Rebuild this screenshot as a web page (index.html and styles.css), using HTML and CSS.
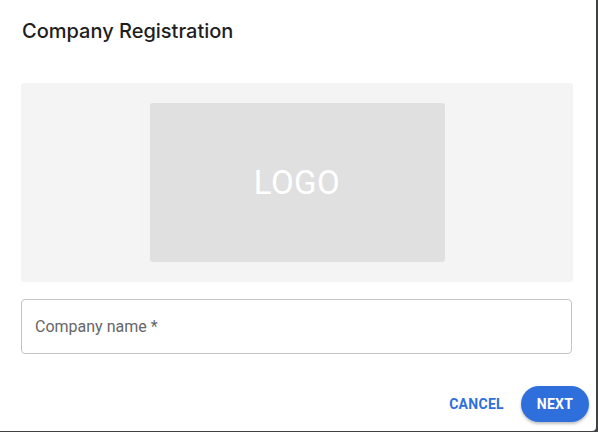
FILE: index.html
```html
<!DOCTYPE html>
<html lang="en">
<head>
    <meta charset="UTF-8">
    <meta name="viewport" content="width=device-width, initial-scale=1.0">
    <link rel="stylesheet" href="styles.css">
</head>
<body>
    <div class="dialog">
        <h2 class="dialog-title">Company Registration</h2>
        <div class="logo-area">
            <div class="logo-box">LOGO</div>
        </div>
        <div class="field">
            <span class="field-label">Company name *</span>
        </div>
        <div class="actions">
            <button class="btn btn-text" type="button">CANCEL</button>
            <button class="btn btn-primary" type="button">NEXT</button>
        </div>
    </div>
</body>
</html>
```

FILE: styles.css
```css
html, body {
    margin: 0;
    padding: 0;
}
body {
    background-color: #3f4144;
    font-family: Roboto, "Liberation Sans", Arial, sans-serif;
    width: 598px;
    height: 432px;
    overflow: hidden;
}
.dialog {
    background-color: #ffffff;
    width: 596px;
    height: 431px;
    box-sizing: border-box;
    border-radius: 0 0 4px 0;
    padding: 0 23px 0 21px;
    display: flex;
    flex-direction: column;
}
.dialog-title {
    margin: 0;
    padding-top: 19px;
    padding-left: 1px;
    font-family: Inter, Roboto, sans-serif;
    font-size: 20px;
    line-height: 24px;
    font-weight: 500;
    color: #1e1e1e;
}
.logo-area {
    margin-top: 40px;
    background-color: #f4f4f4;
    border-radius: 3px;
    height: 199px;
    display: flex;
    justify-content: center;
    align-items: center;
}
.logo-box {
    width: 295px;
    height: 159px;
    background-color: #e0e0e0;
    border-radius: 3px;
    color: #ffffff;
    font-size: 33px;
    display: flex;
    justify-content: center;
    align-items: center;
    letter-spacing: 0.5px;
}
.field {
    margin-top: 17px;
    height: 55px;
    width: 551px;
    box-sizing: border-box;
    border: 1px solid #c4c4c4;
    border-radius: 4px;
    padding: 0 13px;
    display: flex;
    align-items: center;
}
.field-label {
    font-size: 16px;
    color: #666666;
}
.actions {
    margin-top: 32px;
    display: flex;
    justify-content: flex-end;
    align-items: center;
    gap: 9px;
    margin-right: -16px;
}
.btn {
    font-family: Roboto, "Liberation Sans", Arial, sans-serif;
    font-size: 14px;
    font-weight: 700;
    border: none;
    cursor: pointer;
    letter-spacing: 0.3px;
}
.btn-text {
    background: none;
    color: #2f6fdc;
    padding: 8px 8px;
}
.btn-primary {
    background-color: #2f6fdc;
    color: #ffffff;
    height: 36px;
    width: 68px;
    border-radius: 18px;
    box-shadow: 0 2px 3px rgba(0, 0, 0, 0.25);
}
```
